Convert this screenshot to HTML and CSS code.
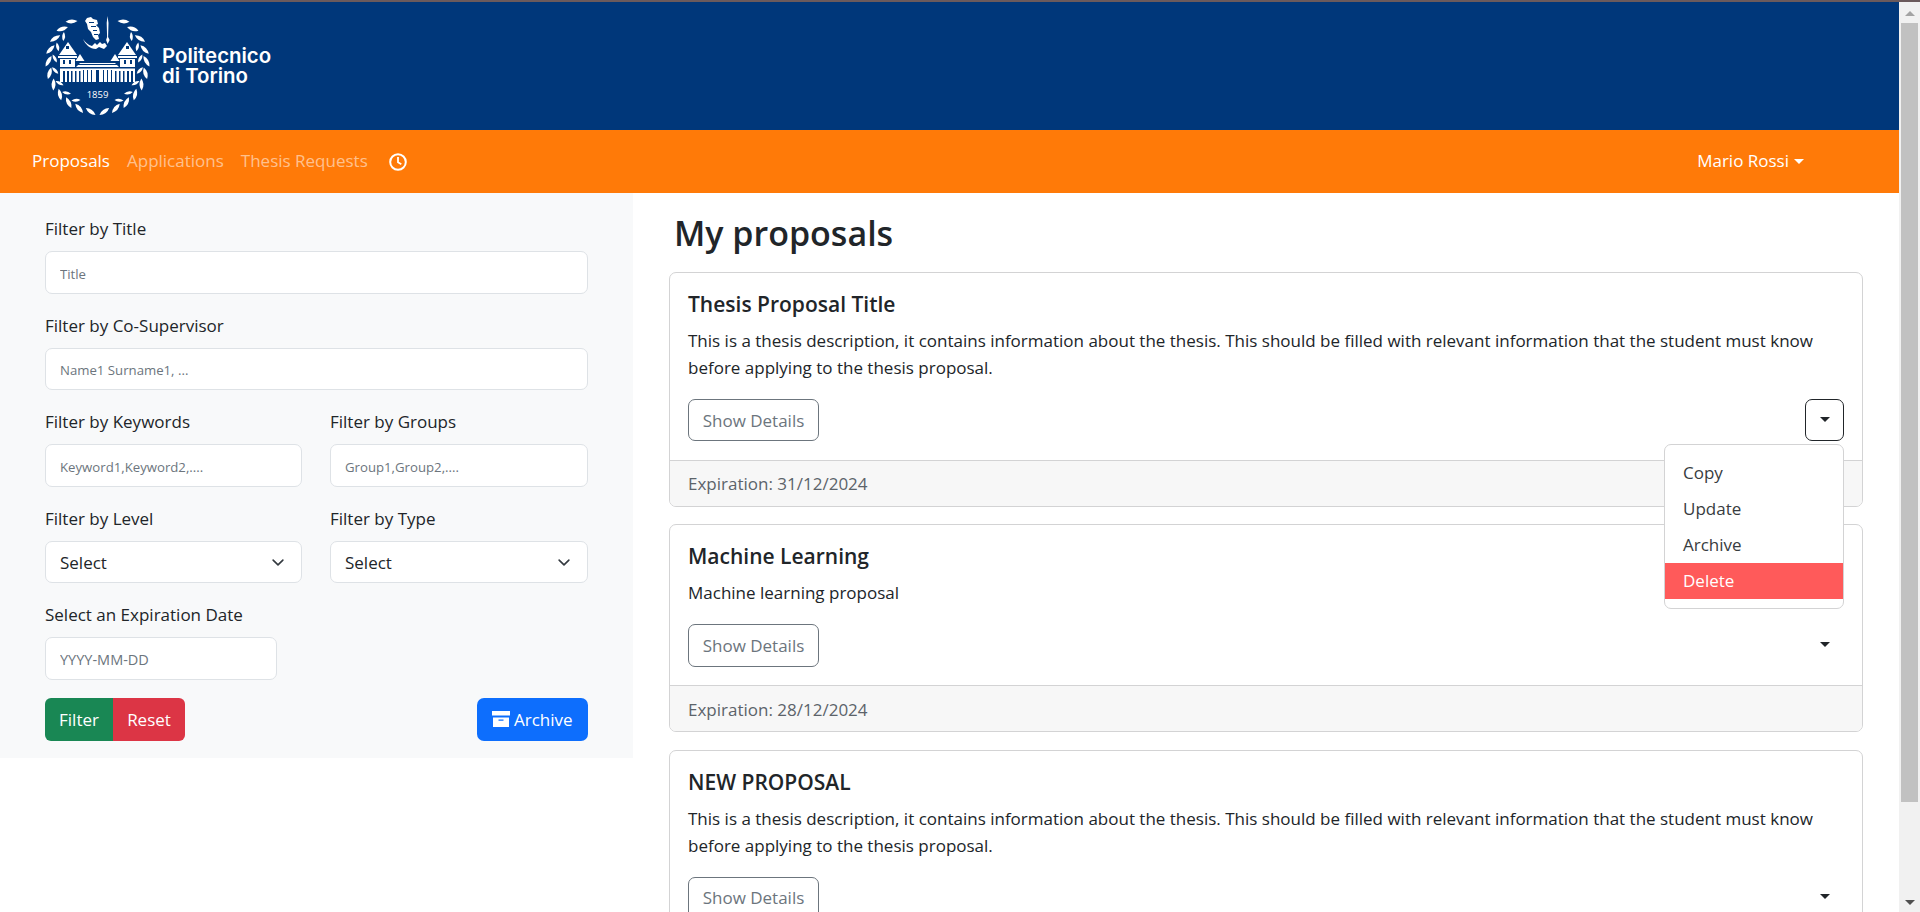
FILE: index.html
```html
<!DOCTYPE html>
<html lang="en">

<head>
    <meta charset="UTF-8">
    <meta name="viewport" content="width=device-width, initial-scale=1.0">
    <title>Proposals</title>
    <link rel="stylesheet" href="styles.css">
</head>

<body>
    <div class="app">
        <div class="page">
            <header class="brand">
                <svg class="crest" viewBox="0 0 116 104" width="116" height="104" fill="#fff">
                    <defs>
                        <path id="leaf" d="M49.500 -1Q55.500 -5 61.500 -1Q55.500 3 49.500 -1z" transform="rotate(-28 55.500 -1)"></path>
                        <path id="leaf-in" d="M51 5Q55.500 2 60 5Q55.500 8 51 5z" transform="rotate(34 55.500 5)"></path>
                        <g id="branch">
                            <use href="#leaf" transform="rotate(32 55.500 48)"></use>
                            <use href="#leaf" transform="rotate(46 55.500 48)"></use>
                            <use href="#leaf" transform="rotate(60 55.500 48)"></use>
                            <use href="#leaf" transform="rotate(74 55.500 48)"></use>
                            <use href="#leaf" transform="rotate(88 55.500 48)"></use>
                            <use href="#leaf" transform="rotate(102 55.500 48)"></use>
                            <use href="#leaf" transform="rotate(116 55.500 48)"></use>
                            <use href="#leaf" transform="rotate(130 55.500 48)"></use>
                            <use href="#leaf" transform="rotate(144 55.500 48)"></use>
                            <use href="#leaf" transform="rotate(158 55.500 48)"></use>
                            <use href="#leaf" transform="rotate(172 55.500 48)"></use>
                            <use href="#leaf-in" transform="rotate(52 55.500 48)"></use>
                            <use href="#leaf-in" transform="rotate(68 55.500 48)"></use>
                            <use href="#leaf-in" transform="rotate(84 55.500 48)"></use>
                            <use href="#leaf-in" transform="rotate(100 55.500 48)"></use>
                            <use href="#leaf-in" transform="rotate(118 55.500 48)"></use>
                            <use href="#leaf-in" transform="rotate(134 55.500 48)"></use>
                            <use href="#leaf-in" transform="rotate(150 55.500 48)"></use>
                        </g>
                    </defs>
                    <use href="#branch"></use>
                    <use href="#branch" transform="translate(111 0) scale(-1 1)"></use>
                    <!-- figure and lance -->
                    <path d="M45 3l4-1 2 2 4 1 1 4-2 1 3 3 1 5-2 2 1 4-3 1-3-3-2-5-3-3-1-5-2-3z"></path>
                    <path d="M41 24c2 3 5 6 9 7l3-3 2 2 3-3 2 2 3-1 2 3-3 3-5-2-3 2c-6 0-11-5-13-10z"></path>
                    <path d="M65.500 1l1 7-.4 14 1.500 3-2 4-1.500-4 1-3-.4-14z"></path>
                    <g fill="#00377a">
                        <rect x="47" y="7" width="5" height="1"></rect>
                        <rect x="49" y="11" width="5" height="1"></rect>
                        <rect x="51" y="15" width="4" height="1"></rect>
                        <rect x="52" y="19" width="4" height="1"></rect>
                    </g>
                    <!-- palace -->
                    <path d="M26 27l9 13H17z"></path>
                    <path d="M85 27l9 13H76z"></path>
                    <path d="M38 39l4.500 7h-9z"></path>
                    <path d="M73 39l4.500 7h-9z"></path>
                    <rect x="16" y="41" width="19" height="2"></rect>
                    <rect x="76" y="41" width="19" height="2"></rect>
                    <path d="M18 44h15v9l5-5h35l5 5v-9h15v23H18z"></path>
                    <g fill="#00377a">
                        <rect x="21" y="45" width="2" height="4"></rect>
                        <rect x="27" y="45" width="2" height="4"></rect>
                        <rect x="82" y="45" width="2" height="4"></rect>
                        <rect x="88" y="45" width="2" height="4"></rect>
                        <rect x="24" y="31" width="3" height="3"></rect>
                        <rect x="84" y="31" width="3" height="3"></rect>
                        <rect x="17" y="52" width="77" height="1.500"></rect>
                        <rect x="34" y="49" width="43" height="1"></rect>
                        <rect x="21" y="56" width="2" height="11"></rect>
                        <rect x="25" y="56" width="2" height="11"></rect>
                        <rect x="29" y="56" width="1.500" height="11"></rect>
                        <rect x="33" y="56" width="1.500" height="11"></rect>
                        <rect x="37" y="56" width="1.500" height="11"></rect>
                        <rect x="41" y="55" width="1" height="12"></rect>
                        <rect x="45" y="55" width="1" height="12"></rect>
                        <rect x="49" y="55" width="1" height="12"></rect>
                        <rect x="54" y="55" width="3" height="12"></rect>
                        <rect x="61" y="55" width="1" height="12"></rect>
                        <rect x="65" y="55" width="1" height="12"></rect>
                        <rect x="69" y="55" width="1" height="12"></rect>
                        <rect x="73" y="56" width="1.500" height="11"></rect>
                        <rect x="77" y="56" width="1.500" height="11"></rect>
                        <rect x="81" y="56" width="1.500" height="11"></rect>
                        <rect x="85" y="56" width="2" height="11"></rect>
                        <rect x="89" y="56" width="2" height="11"></rect>
                    </g>
                    <text class="crest-year" x="55.500" y="83" text-anchor="middle">1859</text>
                </svg>
                <div class="brand-name">Politecnico<br>di Torino</div>
            </header>

            <nav class="topnav">
                <a class="nav-link active">Proposals</a>
                <a class="nav-link">Applications</a>
                <a class="nav-link">Thesis Requests</a>
                <svg class="clock" viewBox="0 0 18 18" width="18" height="18" fill="none" stroke="#fff">
                    <circle cx="9" cy="9" r="7.800" stroke-width="2"></circle>
                    <path d="M9 4v5.300l3.300 2" stroke-width="1.800"></path>
                </svg>
                <a class="nav-user">Mario Rossi<span class="caret"></span></a>
            </nav>

            <div class="content">
                <form class="filters">
                    <div class="field wide">
                        <label>Filter by Title</label>
                        <input type="text" placeholder="Title">
                    </div>
                    <div class="field wide">
                        <label>Filter by Co-Supervisor</label>
                        <input type="text" placeholder="Name1 Surname1, ...">
                    </div>
                    <div class="field">
                        <label>Filter by Keywords</label>
                        <input type="text" placeholder="Keyword1,Keyword2,....">
                    </div>
                    <div class="field">
                        <label>Filter by Groups</label>
                        <input type="text" placeholder="Group1,Group2,....">
                    </div>
                    <div class="field">
                        <label>Filter by Level</label>
                        <select>
                            <option>Select</option>
                        </select>
                    </div>
                    <div class="field">
                        <label>Filter by Type</label>
                        <select>
                            <option>Select</option>
                        </select>
                    </div>
                    <div class="field wide">
                        <label>Select an Expiration Date</label>
                        <input type="text" class="date-input" placeholder="YYYY-MM-DD">
                    </div>
                    <div class="filter-actions wide">
                        <div class="btn-group">
                            <button type="button" class="btn btn-green">Filter</button>
                            <button type="button" class="btn btn-red">Reset</button>
                        </div>
                        <button type="button" class="btn btn-blue">
                            <svg viewBox="0 0 18 16" width="18" height="16" fill="#fff">
                                <rect x="0" y="0" width="18" height="4.500"></rect>
                                <path fill-rule="evenodd" d="M1 6.500h16V16H1zM6.500 8.500v1.300h5V8.500z"></path>
                            </svg>
                            Archive
                        </button>
                    </div>
                </form>

                <main class="proposals">
                    <h2>My proposals</h2>

                    <article class="card">
                        <div class="card-body">
                            <h5>Thesis Proposal Title</h5>
                            <p>This is a thesis description, it contains information about the thesis. This should be filled with relevant information that the student must know before applying to the thesis proposal.</p>
                            <div class="card-actions">
                                <button type="button" class="btn-details">Show Details</button>
                                <button type="button" class="toggle open"><span class="caret"></span></button>
                                <ul class="menu">
                                    <li>Copy</li>
                                    <li>Update</li>
                                    <li>Archive</li>
                                    <li class="danger">Delete</li>
                                </ul>
                            </div>
                        </div>
                        <div class="card-footer">Expiration: 31/12/2024</div>
                    </article>

                    <article class="card">
                        <div class="card-body">
                            <h5>Machine Learning</h5>
                            <p>Machine learning proposal</p>
                            <div class="card-actions">
                                <button type="button" class="btn-details">Show Details</button>
                                <button type="button" class="toggle"><span class="caret"></span></button>
                            </div>
                        </div>
                        <div class="card-footer">Expiration: 28/12/2024</div>
                    </article>

                    <article class="card">
                        <div class="card-body">
                            <h5>NEW PROPOSAL</h5>
                            <p>This is a thesis description, it contains information about the thesis. This should be filled with relevant information that the student must know before applying to the thesis proposal.</p>
                            <div class="card-actions">
                                <button type="button" class="btn-details">Show Details</button>
                                <button type="button" class="toggle"><span class="caret"></span></button>
                            </div>
                        </div>
                        <div class="card-footer">Expiration: 31/12/2024</div>
                    </article>
                </main>
            </div>
        </div>

        <div class="scrollbar">
            <span class="arrow-up"></span>
            <div class="thumb"></div>
            <span class="arrow-down"></span>
        </div>
    </div>
</body>

</html>
```
FILE: styles.css
```css
* {
    box-sizing: border-box;
}

body {
    margin: 0;
    font-family: "Open Sans", sans-serif;
    font-size: 17px;
    line-height: 26.4px;
    color: #212529;
    background-color: #fff;
}

.app {
    display: flex;
    height: 100vh;
    overflow: hidden;
    border-top: 2px solid #6b5a5c;
}

.page {
    flex: 1;
    min-width: 0;
}

/* header */
.brand {
    display: flex;
    height: 128px;
    padding: 13px 0 0 42px;
    background-color: #00377a;
}

.crest-year {
    font-family: "Open Sans", sans-serif;
    font-size: 9.500px;
}

.brand-name {
    margin: 31px 0 0 4px;
    font-family: Inter, sans-serif;
    font-size: 20.400px;
    font-weight: 600;
    line-height: 19.500px;
    color: #fff;
}

.topnav {
    display: flex;
    align-items: center;
    height: 63px;
    padding: 0 95px 0 32px;
    background-color: #ff7a08;
}

.nav-link {
    margin-right: 17px;
    color: rgba(255, 255, 255, .55);
}

.nav-link.active {
    color: #fff;
}

.clock {
    margin-left: 4px;
}

.nav-user {
    display: flex;
    align-items: center;
    margin-left: auto;
    color: #fff;
}

.caret {
    display: inline-block;
    margin-left: 5px;
    border-top: 5px solid;
    border-right: 5px solid transparent;
    border-left: 5px solid transparent;
}

/* filters */
.content {
    display: grid;
    grid-template-columns: 633px 1fr;
}

.filters {
    display: grid;
    grid-template-columns: 257px 258px;
    grid-auto-rows: min-content;
    column-gap: 28px;
    row-gap: 18.600px;
    align-self: start;
    height: 565px;
    padding: 23px 45px 0;
    background-color: #f8f9fa;
}

.wide {
    grid-column: 1 / 3;
}

.field label {
    display: block;
    margin-bottom: 9px;
}

.field input,
.field select {
    display: block;
    width: 100%;
    height: 42.500px;
    padding: 0 14px;
    border: 1px solid #dee2e6;
    border-radius: 7px;
    background-color: #fff;
    font-family: inherit;
    color: #212529;
}

.field input {
    padding-top: 2px;
    font-size: 13.200px;
}

.field input::placeholder {
    color: #6c757d;
    opacity: 1;
}

.field select {
    font-size: 17px;
    appearance: none;
    background-image: url("data:image/svg+xml,%3csvg xmlns='http://www.w3.org/2000/svg' viewBox='0 0 16 16'%3e%3cpath fill='none' stroke='%23343a40' stroke-linecap='round' stroke-linejoin='round' stroke-width='2' d='m2 5 6 6 6-6'/%3e%3c/svg%3e");
    background-repeat: no-repeat;
    background-position: right 14px center;
    background-size: 18px 13px;
}

.field .date-input {
    width: 232px;
    font-size: 14.500px;
}

.filter-actions {
    display: flex;
    justify-content: space-between;
    margin-top: -1px;
}

.btn-group {
    display: flex;
}

.btn {
    height: 43px;
    padding: 0 14px;
    border: 0;
    font-family: inherit;
    font-size: 17px;
    color: #fff;
}

.btn-green {
    width: 68px;
    padding: 0;
    border-radius: 6px 0 0 6px;
    background-color: #198754;
}

.btn-red {
    width: 72px;
    padding: 0;
    border-radius: 0 6px 6px 0;
    background-color: #dc3545;
}

.btn-blue {
    display: flex;
    align-items: center;
    gap: 4px;
    width: 111px;
    padding: 0 0 0 15px;
    border-radius: 7px;
    background-color: #0d6efd;
}

/* proposals */
.proposals {
    padding: 0 36px;
}

.proposals h2 {
    margin: 19px 0 17px 5px;
    font-size: 34px;
    font-weight: 600;
    line-height: 43px;
}

.card {
    margin-bottom: 17.500px;
    border: 1px solid #d3d3d4;
    border-radius: 7px;
}

.card-body {
    padding: 18px 18px 18.500px;
}

.card h5 {
    margin: 0 0 9px;
    font-size: 21px;
    font-weight: 600;
    line-height: 27px;
}

.card p {
    margin: 0 0 18px;
    line-height: 27px;
}

.card-actions {
    display: flex;
    justify-content: space-between;
    position: relative;
}

.btn-details {
    width: 131px;
    height: 42.400px;
    padding: 0;
    border: 1px solid #6c757d;
    border-radius: 7px;
    background-color: transparent;
    font-family: inherit;
    font-size: 17px;
    color: #6c757d;
}

.toggle {
    width: 39px;
    height: 42.400px;
    padding: 0;
    border: 1px solid transparent;
    border-radius: 7px;
    background-color: transparent;
    color: #212529;
}

.toggle.open {
    border-color: #212529;
}

.toggle .caret {
    margin-left: 0;
    vertical-align: 3px;
}

.menu {
    position: absolute;
    top: 45px;
    right: 0;
    width: 180px;
    margin: 0;
    padding: 9.500px 0 9.500px;
    list-style: none;
    background-color: #fff;
    border: 1px solid #d3d3d4;
    border-radius: 7px;
}

.menu li {
    height: 36px;
    padding: 0 18px;
    line-height: 36px;
    color: #383c40;
}

.menu .danger {
    background-color: #ff5a5a;
    color: #fff;
}

.card-footer {
    height: 46px;
    padding: 10.500px 18px;
    border-top: 1px solid #d3d3d4;
    border-radius: 0 0 6px 6px;
    background-color: #f7f7f7;
    color: #5c636a;
}

/* scrollbar */
.scrollbar {
    display: flex;
    flex-direction: column;
    flex: none;
    width: 21px;
    padding: 0 2px;
    background-color: #f1f1f1;
}

.arrow-up,
.arrow-down {
    display: block;
    align-self: center;
    width: 0;
    border-right: 5px solid transparent;
    border-left: 5px solid transparent;
}

.arrow-up {
    margin: 9px 0 7px;
    border-bottom: 5px solid #a3a3a3;
}

.arrow-down {
    margin: auto 0 7px;
    border-top: 5px solid #505050;
}

.thumb {
    height: 779px;
    background-color: #c1c1c1;
}
```
